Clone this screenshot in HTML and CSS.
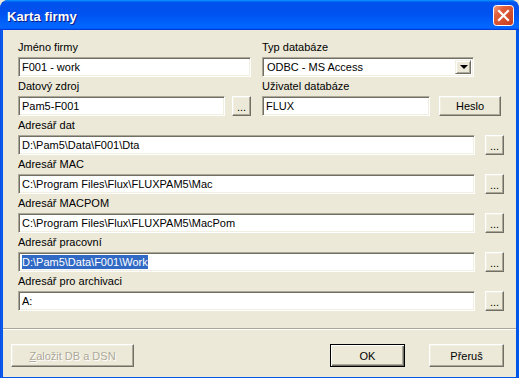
FILE: index.html
```html
<!DOCTYPE html>
<html>
<head>
<meta charset="utf-8">
<link rel="stylesheet" href="styles.css">
</head>
<body>
<div class="window">
  <div class="titlebar">
    <span class="title">Karta firmy</span>
    <span class="close">
      <svg width="21" height="21" viewBox="0 0 21 21">
        <defs>
          <linearGradient id="cg" x1="0" y1="0" x2="1" y2="1">
            <stop offset="0" stop-color="#F2A488"/>
            <stop offset="0.3" stop-color="#E2603C"/>
            <stop offset="1" stop-color="#C33A1A"/>
          </linearGradient>
        </defs>
        <rect x="0.5" y="0.5" width="20" height="20" rx="3" fill="url(#cg)" stroke="#FFFFFF"/>
        <path d="M6 6 L15 15 M15 6 L6 15" stroke="#FFFFFF" stroke-width="2.2" stroke-linecap="square"/>
      </svg>
    </span>
  </div>
  <div class="body">
    <div class="content">
      <div class="row">
        <div class="col-left">
          <div class="label">Jméno firmy</div>
          <div class="edit w233">F001 - work</div>
        </div>
        <div class="col-right">
          <div class="label">Typ databáze</div>
          <div class="combo">
            <span class="combo-text">ODBC - MS Access</span>
            <span class="combo-btn"><span class="arrow"></span></span>
          </div>
        </div>
      </div>
      <div class="row">
        <div class="col-left">
          <div class="label">Datový zdroj</div>
          <div class="line gap7">
            <div class="edit w207">Pam5-F001</div>
            <div class="btn dots">...</div>
          </div>
        </div>
        <div class="col-right">
          <div class="label">Uživatel databáze</div>
          <div class="line gap9">
            <div class="edit w168">FLUX</div>
            <div class="btn heslo">Heslo</div>
          </div>
        </div>
      </div>
      <div class="full">
        <div class="label">Adresář dat</div>
        <div class="line gap10">
          <div class="edit w457">D:\Pam5\Data\F001\Dta</div>
          <div class="btn dots">...</div>
        </div>
      </div>
      <div class="full">
        <div class="label">Adresář MAC</div>
        <div class="line gap10">
          <div class="edit w457">C:\Program Files\Flux\FLUXPAM5\Mac</div>
          <div class="btn dots">...</div>
        </div>
      </div>
      <div class="full">
        <div class="label">Adresář MACPOM</div>
        <div class="line gap10">
          <div class="edit w457">C:\Program Files\Flux\FLUXPAM5\MacPom</div>
          <div class="btn dots">...</div>
        </div>
      </div>
      <div class="full">
        <div class="label">Adresář pracovní</div>
        <div class="line gap10">
          <div class="edit w457"><span class="sel">D:\Pam5\Data\F001\Work</span></div>
          <div class="btn dots">...</div>
        </div>
      </div>
      <div class="full">
        <div class="label">Adresář pro archivaci</div>
        <div class="line gap10">
          <div class="edit w457">A:</div>
          <div class="btn dots">...</div>
        </div>
      </div>
    </div>
    <div class="sep"></div>
    <div class="footer">
      <div class="btn disabled zalozit"><u>Z</u>aložit DB a DSN</div>
      <div class="spacer"></div>
      <div class="btn default ok">OK</div>
      <div class="btn preru">Přeruš</div>
    </div>
  </div>
</div>
</body>
</html>
```
FILE: styles.css
```css
html, body {
  margin: 0;
  padding: 0;
  background: #ECE9D8;
}
body {
  font-family: "Liberation Sans", Arial, sans-serif;
  font-size: 11px;
  color: #000;
}
.window {
  width: 519px;
  height: 380px;
  box-sizing: border-box;
  background: linear-gradient(90deg, #0831D9 0, #166AEE 1px, #0055EA 2px, #0055EA 100%);
  border-radius: 8px 8px 0 0;
  padding: 0 3px 3px 3px;
  display: flex;
  flex-direction: column;
  overflow: hidden;
}
.titlebar {
  height: 30px;
  margin: 0 -3px;
  padding: 2px 5px 0 7px;
  box-sizing: border-box;
  display: flex;
  align-items: center;
  border-radius: 8px 8px 0 0;
  background: linear-gradient(180deg, #0997FF 0, #0053EE 8%, #0050EE 40%, #0066FF 88%, #0066FF 93%, #005BFF 95%, #003DD7 96%, #003DD7 100%);
}
.title {
  flex: 1;
  color: #FFFFFF;
  font-family: "Liberation Sans", Arial, sans-serif;
  font-weight: bold;
  font-size: 13px;
  text-shadow: 1px 1px 0 #0A1883;
  letter-spacing: 0.1px;
}
.close {
  width: 21px;
  height: 21px;
  display: block;
  margin-top: -1px;
}
.close svg { display: block; }
.body {
  flex: 1;
  background: #ECE9D8;
  display: flex;
  flex-direction: column;
}
.content {
  padding: 8px 0 0 15px;
  display: flex;
  flex-direction: column;
}
.row {
  display: flex;
  gap: 11px;
}
.col-left { width: 233px; flex: none; }
.col-right { width: 239px; flex: none; }
.label {
  height: 19px;
  line-height: 13px;
  padding-top: 3px;
  box-sizing: border-box;
  white-space: nowrap;
}
.line {
  display: flex;
  align-items: flex-start;
}
.gap7 { gap: 7px; }
.gap9 { gap: 9px; }
.gap10 { gap: 10px; }
.edit {
  flex: none;
  height: 20px;
  box-sizing: border-box;
  background: #FFFFFF;
  border: 1px solid;
  border-color: #ACA899 #FFFFFF #FFFFFF #ACA899;
  box-shadow: inset 1px 1px 0 #716F64, inset -1px -1px 0 #F1EFE2;
  padding: 2px 0 0 3px;
  line-height: 14px;
  white-space: nowrap;
  overflow: hidden;
}
.w233 { width: 233px; }
.w207 { width: 207px; }
.w168 { width: 168px; }
.w457 { width: 457px; }
.sel {
  background: #316AC5;
  color: #FFFFFF;
  display: inline-block;
  line-height: 14px;
}
.combo {
  width: 212px;
  height: 20px;
  box-sizing: border-box;
  background: #FFFFFF;
  border: 1px solid;
  border-color: #ACA899 #FFFFFF #FFFFFF #ACA899;
  box-shadow: inset 1px 1px 0 #716F64, inset -1px -1px 0 #F1EFE2;
  display: flex;
  align-items: stretch;
  padding: 2px 2px 2px 2px;
}
.combo-text {
  flex: 1;
  padding-left: 2px;
  line-height: 14px;
}
.combo-btn {
  width: 16px;
  box-sizing: border-box;
  background: #ECE9D8;
  border: 1px solid;
  border-color: #F1EFE2 #716F64 #716F64 #F1EFE2;
  box-shadow: inset 1px 1px 0 #FFFFFF, inset -1px -1px 0 #ACA899;
  display: flex;
  align-items: center;
  justify-content: center;
}
.arrow {
  width: 0;
  height: 0;
  border-left: 4px solid transparent;
  border-right: 4px solid transparent;
  border-top: 4px solid #000000;
  margin-left: 1px;
}
.full { width: 486px; }
.btn {
  flex: none;
  box-sizing: border-box;
  background: #ECE9D8;
  border: 1px solid;
  border-color: #FFFFFF #716F64 #716F64 #FFFFFF;
  box-shadow: inset -1px -1px 0 #ACA899, inset 1px 1px 0 #F1EFE2;
  display: flex;
  align-items: center;
  justify-content: center;
  white-space: nowrap;
}
.dots {
  width: 19px;
  height: 20px;
  align-items: flex-end;
  padding-bottom: 4px;
  line-height: 8px;
}
.heslo {
  width: 62px;
  height: 20px;
}
.sep {
  margin-top: 17px;
  height: 1px;
  background: #ACA899;
  border-bottom: 1px solid #FFFFFF;
}
.footer {
  display: flex;
  padding: 14px 12px 0 8px;
  gap: 24px;
}
.spacer { flex: 1; }
.footer .btn {
  height: 23px;
  width: 75px;
}
.footer .zalozit {
  width: 123px;
}
.disabled {
  color: #ACA899;
  text-shadow: 1px 1px 0 #FFFFFF;
}
.default {
  border: 1px solid #000000;
  box-shadow: inset 1px 1px 0 #FFFFFF, inset -1px -1px 0 #716F64, inset -2px -2px 0 #ACA899;
}
```
